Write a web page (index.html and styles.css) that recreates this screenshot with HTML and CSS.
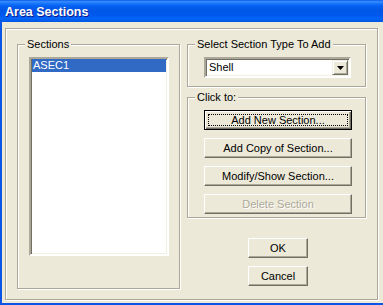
FILE: index.html
```html
<!DOCTYPE html>
<html lang="en">
<head>
  <meta charset="UTF-8" />
  <title>Area Sections</title>
  <link rel="stylesheet" href="styles.css">
</head>
<body>

  <div class="window">
    <div class="titlebar">
      <span class="title">Area Sections</span>
    </div>

    <div class="client">
      <div class="frame">

        <fieldset class="group sections">
          <legend>Sections</legend>
          <div class="listbox">
            <div class="item selected">ASEC1</div>
          </div>
        </fieldset>

        <div class="side">
          <fieldset class="group type">
            <legend>Select Section Type To Add</legend>
            <div class="combo">
              <span class="combo-value">Shell</span>
              <span class="combo-btn">
                <svg width="7" height="4" viewBox="0 0 7 4"><path d="M0 0h7L3.5 4z" fill="#000"/></svg>
              </span>
            </div>
          </fieldset>

          <fieldset class="group actions">
            <legend>Click to:</legend>
            <div class="action-list">
              <button class="btn focused">Add New Section...</button>
              <button class="btn">Add Copy of Section...</button>
              <button class="btn">Modify/Show Section...</button>
              <button class="btn" disabled>Delete Section</button>
            </div>
          </fieldset>

          <div class="dialog-buttons">
            <button class="btn small">OK</button>
            <button class="btn small">Cancel</button>
          </div>
        </div>

      </div>
    </div>
  </div>

</body>
</html>
```

FILE: styles.css
```css
* {
  box-sizing: border-box;
}

body {
  margin: 0;
  font-family: 'Liberation Sans', Arial, sans-serif;
  font-size: 11px;
  color: #000;
  background: #ece9d8;
}

.window {
  width: 383px;
  height: 305px;
  background: #ece9d8;
  border-left: 2px solid #0a54e6;
  border-bottom: 2px solid #0a54e6;
}

.titlebar {
  height: 22px;
  margin-left: -2px;
  padding-left: 5px;
  display: flex;
  align-items: center;
  background: linear-gradient(to bottom, #0a5de9 0%, #3a8dff 8%, #1576fc 16%, #0560ef 28%, #0056e6 50%, #0059ee 70%, #0464f8 85%, #0056e0 100%);
}

.title {
  color: #fff;
  font-weight: bold;
  font-size: 12.5px;
  text-shadow: 1px 1px 0 #0f1a8a;
  padding-top: 1px;
}

.client {
  padding: 6px 0 0 3px;
}

/* etched frames */
.frame,
.group {
  border: 1px solid #aca899;
  box-shadow: 1px 1px 0 #fff, inset 1px 1px 0 #fff;
}

.frame {
  width: 373px;
  height: 272px;
  display: flex;
  gap: 7px;
  padding: 9px 0 10px 11px;
}

.group {
  margin: 0;
  padding: 0;
  min-width: 0;
}

.group legend {
  margin-left: 7px;
  padding: 0 2px;
  line-height: 13px;
  background: #ece9d8;
}

.sections {
  width: 163px;
}

.listbox {
  width: 140px;
  height: 199px;
  margin: 6px 0 0 11px;
  background: #fff;
  border: 2px solid;
  border-color: #aca899 #fff #fff #aca899;
  box-shadow: inset 1px 1px 0 #716f64, inset -1px -1px 0 #f1efe2;
  padding: 0 1px;
}

.item {
  height: 13px;
  line-height: 13px;
  padding-left: 1px;
}

.item.selected {
  background: #316ac5;
  color: #fff;
}

.side {
  width: 179px;
  display: flex;
  flex-direction: column;
}

.type {
  padding-bottom: 8px;
}

.combo {
  width: 147px;
  height: 21px;
  margin: 6px 0 0 16px;
  display: flex;
  background: #fff;
  border: 2px solid;
  border-color: #aca899 #fff #fff #aca899;
  box-shadow: inset 1px 1px 0 #716f64, inset -1px -1px 0 #f1efe2;
  padding: 1px;
}

.combo-value {
  flex: 1;
  padding-left: 2px;
  line-height: 15px;
}

.combo-btn {
  width: 16px;
  display: flex;
  align-items: center;
  justify-content: center;
  background: #ece9d8;
  border: 1px solid;
  border-color: #f1efe2 #716f64 #716f64 #f1efe2;
  box-shadow: inset 1px 1px 0 #fff, inset -1px -1px 0 #aca899;
}

.actions {
  margin-top: 4px;
  padding-bottom: 3px;
}

.action-list {
  display: flex;
  flex-direction: column;
  gap: 8px;
  margin: 6px 0 0 16px;
}

.btn {
  width: 148px;
  height: 20px;
  padding: 0;
  font: inherit;
  color: #000;
  background: #ece9d8;
  border: 1px solid;
  border-color: #fff #716f64 #716f64 #fff;
  box-shadow: inset -1px -1px 0 #aca899;
}

.btn.focused {
  border-color: #000;
  box-shadow: inset 1px 1px 0 #fff, inset -1px -1px 0 #716f64, inset -2px -2px 0 #aca899;
  outline: 1px dotted #000;
  outline-offset: -5px;
}

.btn:disabled {
  color: #aca899;
  text-shadow: 1px 1px 0 #fff;
}

.dialog-buttons {
  display: flex;
  flex-direction: column;
  gap: 8px;
  margin: 20px 0 0 61px;
}

.btn.small {
  width: 60px;
}
```
